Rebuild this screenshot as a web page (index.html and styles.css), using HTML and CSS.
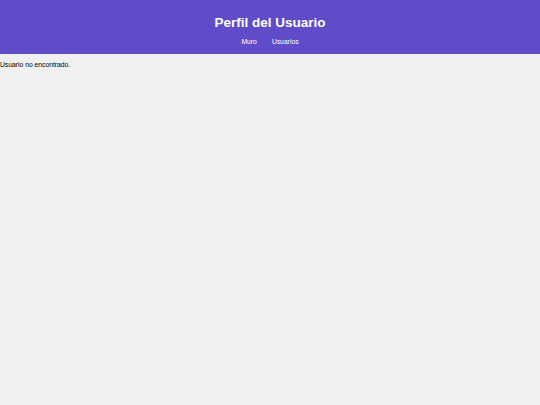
FILE: index.html
```html
<!DOCTYPE html>
<html lang="es">
<head>
    <meta charset="UTF-8">
    <title>Perfil del Usuario</title>
    <link rel="stylesheet" href="styles.css">
</head>
<body>
    <header class="site-header">
        <h1 class="site-title">Perfil del Usuario</h1>
        <nav class="site-nav">
            <a href="#" class="site-nav-link">Muro</a>
            <a href="#" class="site-nav-link">Usuarios</a>
        </nav>
    </header>
    <main class="content">
        <p class="message">Usuario no encontrado.</p>
    </main>
</body>
</html>
```

FILE: styles.css
```css
body {
    margin: 0;
    background-color: #f0f0f0;
    color: #000;
    font-family: "Liberation Sans", Arial, sans-serif;
    font-size: 6.75px;
}
.site-header {
    background-color: #604bc9;
    color: #fff;
    text-align: center;
    padding: 15px 0 8px;
}
.site-title {
    margin: 0 0 7px;
    font-size: 13.5px;
    line-height: 16px;
    font-weight: bold;
}
.site-nav {
    display: flex;
    justify-content: center;
    gap: 15px;
    line-height: 8px;
}
.site-nav-link {
    color: #fff;
    text-decoration: none;
}
.content {
    padding: 0;
}
.message {
    margin: 7px 0;
}
```
